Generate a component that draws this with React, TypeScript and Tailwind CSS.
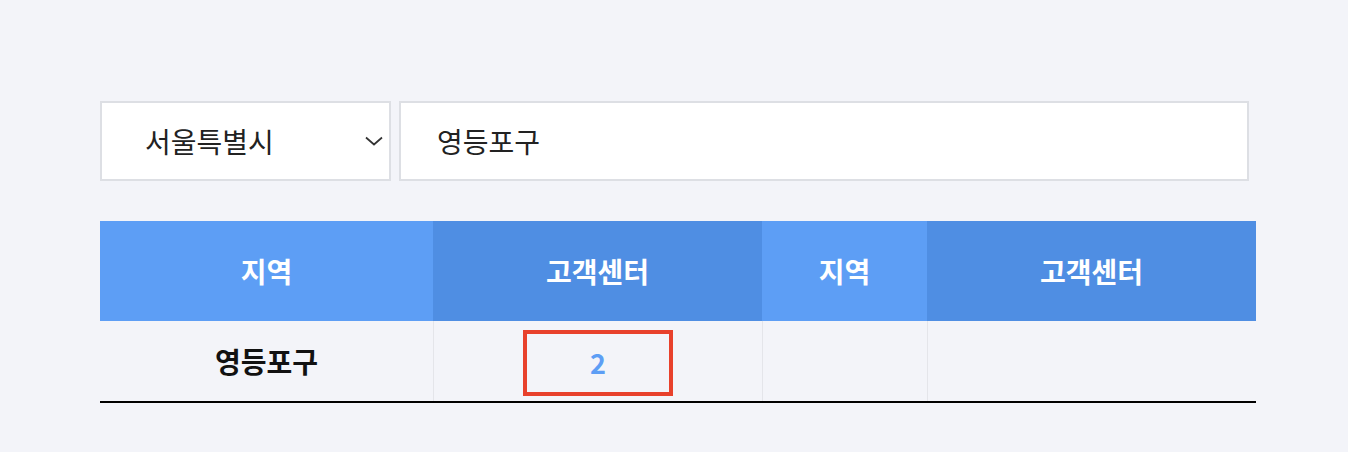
const font = {
    fontFamily: '"Noto Sans CJK KR", "Noto Sans", sans-serif',
};

/* ─── Search bar ─── */

function Chevron() {
    return (
        <svg width="18" height="10" viewBox="0 0 18 10" fill="none" aria-hidden="true">
            <path d="M1 1.5 9 8.5 17 1.5" stroke="#333" strokeWidth="1.7" />
        </svg>
    );
}

function SearchBar() {
    return (
        <div className="flex gap-2">
            <div className="flex h-20 w-[291px] items-center justify-between border-2 border-[#dddfe4] bg-white pl-[43px] pr-[6px]">
                <span className="text-[28px] text-[#222]">서울특별시</span>
                <Chevron />
            </div>
            <div className="flex h-20 w-[850px] items-center border-2 border-[#dddfe4] bg-white pl-9">
                <span className="text-[28px] text-[#222]">영등포구</span>
            </div>
        </div>
    );
}

/* ─── Center table ─── */

const columns = [
    { label: '지역', width: 'w-[333px]', bg: 'bg-[#5d9ef5]' },
    { label: '고객센터', width: 'w-[329px]', bg: 'bg-[#4f8ee3]' },
    { label: '지역', width: 'w-[165px]', bg: 'bg-[#5d9ef5]' },
    { label: '고객센터', width: 'w-[329px]', bg: 'bg-[#4f8ee3]' },
];

function CenterTable() {
    return (
        <div className="mt-10 w-[1156px] border-b-2 border-black">
            <div className="flex h-[100px]">
                {columns.map((col, i) => (
                    <div
                        key={i}
                        className={`${col.width} ${col.bg} flex items-center justify-center text-[28px] font-bold text-white`}
                    >
                        {col.label}
                    </div>
                ))}
            </div>
            <div className="flex h-20">
                <div className="flex w-[333px] items-center justify-center text-[28px] font-bold text-[#111]">
                    영등포구
                </div>
                <div className="flex w-[329px] items-center justify-center border-l border-[#e4e5ea] pt-1">
                    <span className="flex h-[66px] w-[150px] items-center justify-center border-[4px] border-[#e8412c] text-[27px] font-bold text-[#5d9ef5]">
                        2
                    </span>
                </div>
                <div className="w-[165px] border-l border-[#e4e5ea]" />
                <div className="w-[329px] border-l border-[#e4e5ea]" />
            </div>
        </div>
    );
}

export default function App() {
    return (
        <div className="h-[452px] w-full bg-[#f3f4f9] pl-[100px] pt-[101px]" style={font}>
            <SearchBar />
            <CenterTable />
        </div>
    );
}
